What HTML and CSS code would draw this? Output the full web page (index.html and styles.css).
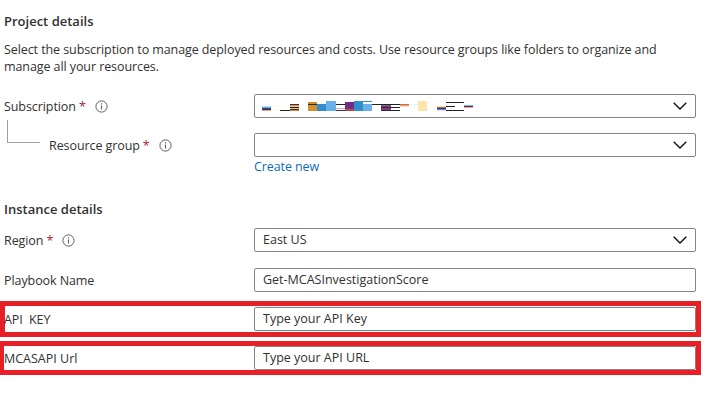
FILE: index.html
```html
<!DOCTYPE html>
<html lang="en">
<head>
<meta charset="utf-8">
<title>Deploy playbook</title>
<link rel="stylesheet" href="styles.css">
</head>
<body>
<svg class="defs" aria-hidden="true">
  <symbol id="info" viewBox="0 0 13 13"><circle cx="6.5" cy="6.5" r="5.6" fill="none" stroke="#605e5c" stroke-width="1"/><path d="M6.5 5.6v4M6.5 3.3v1.2" stroke="#605e5c" stroke-width="1.1"/></symbol>
  <symbol id="chevron" viewBox="0 0 14 8"><path d="M.7.7 7 7 13.3.7" fill="none" stroke="#111" stroke-width="1.4"/></symbol>
</svg>
<main class="form">
  <h2 class="title">Project details</h2>
  <p class="intro">Select the subscription to manage deployed resources and costs. Use resource groups like folders to organize and<br>manage all your resources.</p>
  <div class="row subscription">
    <div class="label"><span>Subscription</span><b class="req">*</b><svg class="info"><use href="#info"/></svg></div>
    <div class="field">
      <svg class="masked" viewBox="0 0 212 10" shape-rendering="crispEdges">
        <path fill="#b9defa" d="M0 5h9v1H0z"/><path fill="#68a9e8" d="M0 6h9v1H0z"/><path fill="#35469d" d="M0 7h9v1H0z"/><path fill="#4b3030" d="M0 8h9v1H0z"/><path fill="#dcae91" d="M0 9h9v1H0z"/>
        <path fill="#fffbe4" d="M9 4h9v1H9zM9 9h9v1H9z"/><path fill="#222" d="M18 9h10v1H18z"/>
        <path fill="#402d38" d="M28 3h9v1h-9z"/><path fill="#dd9278" d="M28 4h9v1h-9z"/><path fill="#f4c66c" d="M28 5h9v1h-9z"/><path fill="#222" d="M28 6h9v1h-9z"/><path fill="#ffc170" d="M28 7h9v1h-9z"/><path fill="#333" d="M28 8h9v1h-9z"/><path fill="#bd8854" d="M28 9h9v1h-9z"/>
        <path fill="#cf922e" d="M46 1h9v9h-9z"/><path fill="#302a20" d="M46 3h9v1h-9z"/>
        <path fill="#338dcd" d="M55 3h9v7h-9z"/><path fill="#69afe9" d="M64 0h10v10H64z"/>
        <path fill="#222" d="M74 3h9v1h-9z"/><path fill="#d4a2ac" d="M74 7h9v1h-9z"/><path fill="#39285d" d="M74 9h9v1h-9z"/>
        <path fill="#6c2e8b" d="M83 1h9v7h-9z"/><path fill="#d25a45" d="M83 8h9v1h-9z"/><path fill="#8c4933" d="M83 9h9v1h-9z"/>
        <path fill="#338dcd" d="M92 0h9v10h-9zM101 0h9v1h-9z"/><path fill="#69afe9" d="M101 3h9v7h-9z"/>
        <path fill="#222" d="M110 3h29v1h-29zM129 6h9v1h-9zM129 9h9v1h-9z"/>
        <path fill="#706398" d="M119 4h10v1h-10z"/><path fill="#8b3c63" d="M119 5h10v1h-10zM119 7h10v1h-10z"/><path fill="#2b2945" d="M119 6h10v1h-10zM119 9h10v1h-10z"/><path fill="#744286" d="M119 8h10v1h-10z"/>
        <path fill="#cd6d55" d="M138 3h9v1h-9z"/><path fill="#eda264" d="M138 4h9v1h-9z"/><path fill="#ffe4af" d="M138 5h9v1h-9z"/><path fill="#dcf7ff" d="M147 3h9v1h-9z"/>
        <path fill="#fce4ac" d="M156 0h9v10h-9z"/>
        <path fill="#ffe18f" d="M175 5h9v1h-9z"/><path fill="#a26663" d="M175 6h9v1h-9z"/><path fill="#353aa1" d="M175 7h9v1h-9z"/><path fill="#5385d9" d="M175 8h9v1h-9z"/><path fill="#ffe3b0" d="M175 9h9v1h-9z"/>
        <path fill="#222" d="M184 1h18v1h-18zM184 5h9v1h-9zM184 9h18v1h-18z"/>
        <path fill="#71bfe9" d="M202 4h9v1h-9z"/><path fill="#56323c" d="M202 5h9v1h-9z"/><path fill="#e3a0ad" d="M202 6h9v1h-9z"/>
      </svg>
      <svg class="chevron"><use href="#chevron"/></svg>
    </div>
  </div>
  <div class="row group">
    <div class="label"><i class="branch"></i><span>Resource group</span><b class="req">*</b><svg class="info"><use href="#info"/></svg></div>
    <div class="field"><svg class="chevron"><use href="#chevron"/></svg></div>
  </div>
  <a class="create">Create new</a>
  <h2 class="title instance">Instance details</h2>
  <div class="row region">
    <div class="label"><span>Region</span><b class="req">*</b><svg class="info"><use href="#info"/></svg></div>
    <div class="field"><span>East US</span><svg class="chevron"><use href="#chevron"/></svg></div>
  </div>
  <div class="row playbook">
    <div class="label"><span>Playbook Name</span></div>
    <div class="field"><span>Get-MCASInvestigationScore</span></div>
  </div>
  <div class="row marked key">
    <div class="label"><span>API&nbsp; KEY</span></div>
    <div class="field"><span>Type your API Key</span></div>
  </div>
  <div class="row marked url">
    <div class="label"><span>MCASAPI Url</span></div>
    <div class="field"><span>Type your API URL</span></div>
  </div>
</main>
</body>
</html>
```
FILE: styles.css
```css
* { box-sizing: border-box; }
body {
  margin: 0;
  background: #fff;
  color: #323130;
  font: 12.5px/17px "Open Sans", "Noto Sans", sans-serif;
}
.defs { display: none; }
.form { width: 701px; padding-top: 12px; }
.title { margin: 0 0 0 4px; font-size: 13px; line-height: 18px; font-weight: 600; }
.intro { margin: 11px 0 0 4px; white-space: nowrap; letter-spacing: -0.085px; }
.row { display: flex; height: 24px; padding-left: 4px; }
.label { width: 250px; flex: none; display: flex; align-items: center; white-space: nowrap; letter-spacing: -0.08px; }
.field {
  width: 442px; height: 24px; flex: none;
  display: flex; align-items: center;
  padding: 0 8px 1px;
  border: 1px solid #858387; border-radius: 2px;
  background: #fff;
}
.req { width: 7px; margin-left: 3px; color: #a4262c; font-weight: 400; font-size: 12.5px; }
.info { width: 13px; height: 13px; margin: 1px 0 0 9px; }
.chevron { width: 14px; height: 8px; margin: 1px 0 0 auto; }
.masked { width: 212px; height: 10px; margin-left: -1px; }
.subscription { margin-top: 19px; }
.group { margin-top: 15px; }
.branch {
  width: 33px; height: 23px; margin: -27px 9px 0 3px;
  border: solid #a19f9d; border-width: 0 0 1px 1px;
}
.create { display: block; margin: 1px 0 0 254px; color: #0f6cbd; letter-spacing: -0.1px; }
.instance { margin-top: 25px; }
.region { margin-top: 10px; }
.playbook { margin-top: 16px; }
.marked { border: 5px solid #e71f26; padding-left: 0; }
.marked .label { width: 249px; }
.marked .label span { margin-left: -1px; }
.key { height: 36px; margin-top: 9px; padding-top: 1px; }
.key .label { height: 24px; }
.url { height: 34px; margin-top: 4px; border-left-width: 4px; }
.url .label { width: 250px; letter-spacing: 0; }
.url .label span { margin-left: 0; }
```
